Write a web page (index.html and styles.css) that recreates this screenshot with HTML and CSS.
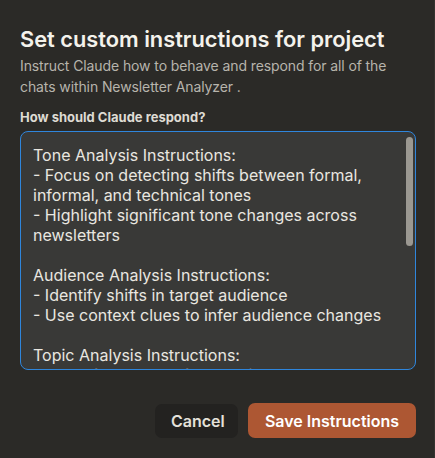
FILE: index.html
```html
<!DOCTYPE html>
<html lang="en">
<head>
<meta charset="utf-8">
<title>Set custom instructions for project</title>
<link rel="stylesheet" href="styles.css">
</head>
<body>
<div class="dialog">
  <h2 class="title">Set custom instructions for project</h2>
  <p class="subtitle">Instruct Claude how to behave and respond for all of the chats within Newsletter Analyzer .</p>
  <label class="label">How should Claude respond?</label>
  <div class="field">
    <div class="field-text">Tone Analysis Instructions:
- Focus on detecting shifts between formal,
informal, and technical tones
- Highlight significant tone changes across
newsletters

Audience Analysis Instructions:
- Identify shifts in target audience
- Use context clues to infer audience changes

Topic Analysis Instructions:
- Track frequency of key topics
- Note emerging subjects</div>
    <div class="scroll-thumb"></div>
  </div>
  <div class="actions">
    <button class="btn btn-cancel">Cancel</button>
    <button class="btn btn-save">Save Instructions</button>
  </div>
</div>
</body>
</html>
```
FILE: styles.css
```css
html, body {
  margin: 0;
  padding: 0;
  background: #2b2a27;
}
body {
  font-family: "Inter", "Liberation Sans", sans-serif;
  color: #f2f0ea;
}
.dialog {
  width: 435px;
  height: 458px;
  box-sizing: border-box;
  padding: 24px 18px 0 20px;
  border-right: 1px solid #34332f;
  display: flex;
  flex-direction: column;
}
.title {
  margin: 0;
  font-size: 21.8px;
  line-height: 30px;
  font-weight: 600;
  color: #f4f2ec;
  letter-spacing: 0;
}
.subtitle {
  margin: 1px 0 0;
  font-size: 14px;
  line-height: 21px;
  letter-spacing: -0.1px;
  color: #b7b4ac;
}
.label {
  margin-top: 11px;
  font-size: 13px;
  line-height: 18px;
  font-weight: 700;
  color: #dedbd3;
}
.field {
  position: relative;
  margin-top: 5px;
  height: 239px;
  box-sizing: border-box;
  border: 1px solid #2f86dc;
  border-radius: 8px;
  background: #393937;
  overflow: hidden;
  padding: 13px 12px 0 12px;
}
.field-text {
  white-space: pre-line;
  font-size: 16px;
  line-height: 20px;
  color: #e9e7e0;
}
.scroll-thumb {
  position: absolute;
  top: 5px;
  right: 2px;
  width: 7px;
  height: 109px;
  border-radius: 4px;
  background: #9b9891;
}
.actions {
  display: flex;
  justify-content: flex-end;
  gap: 10px;
  margin-top: 34px;
}
.btn {
  font-family: inherit;
  font-size: 16px;
  font-weight: 600;
  border: none;
  border-radius: 7px;
  height: 34px;
  padding: 0 16px;
  color: #fff;
}
.btn-cancel {
  background: #232220;
  color: #e4e1da;
  width: 83px;
}
.btn-save {
  background: #ad5733;
  height: 35px;
  margin-top: -1px;
  width: 168px;
}
```
